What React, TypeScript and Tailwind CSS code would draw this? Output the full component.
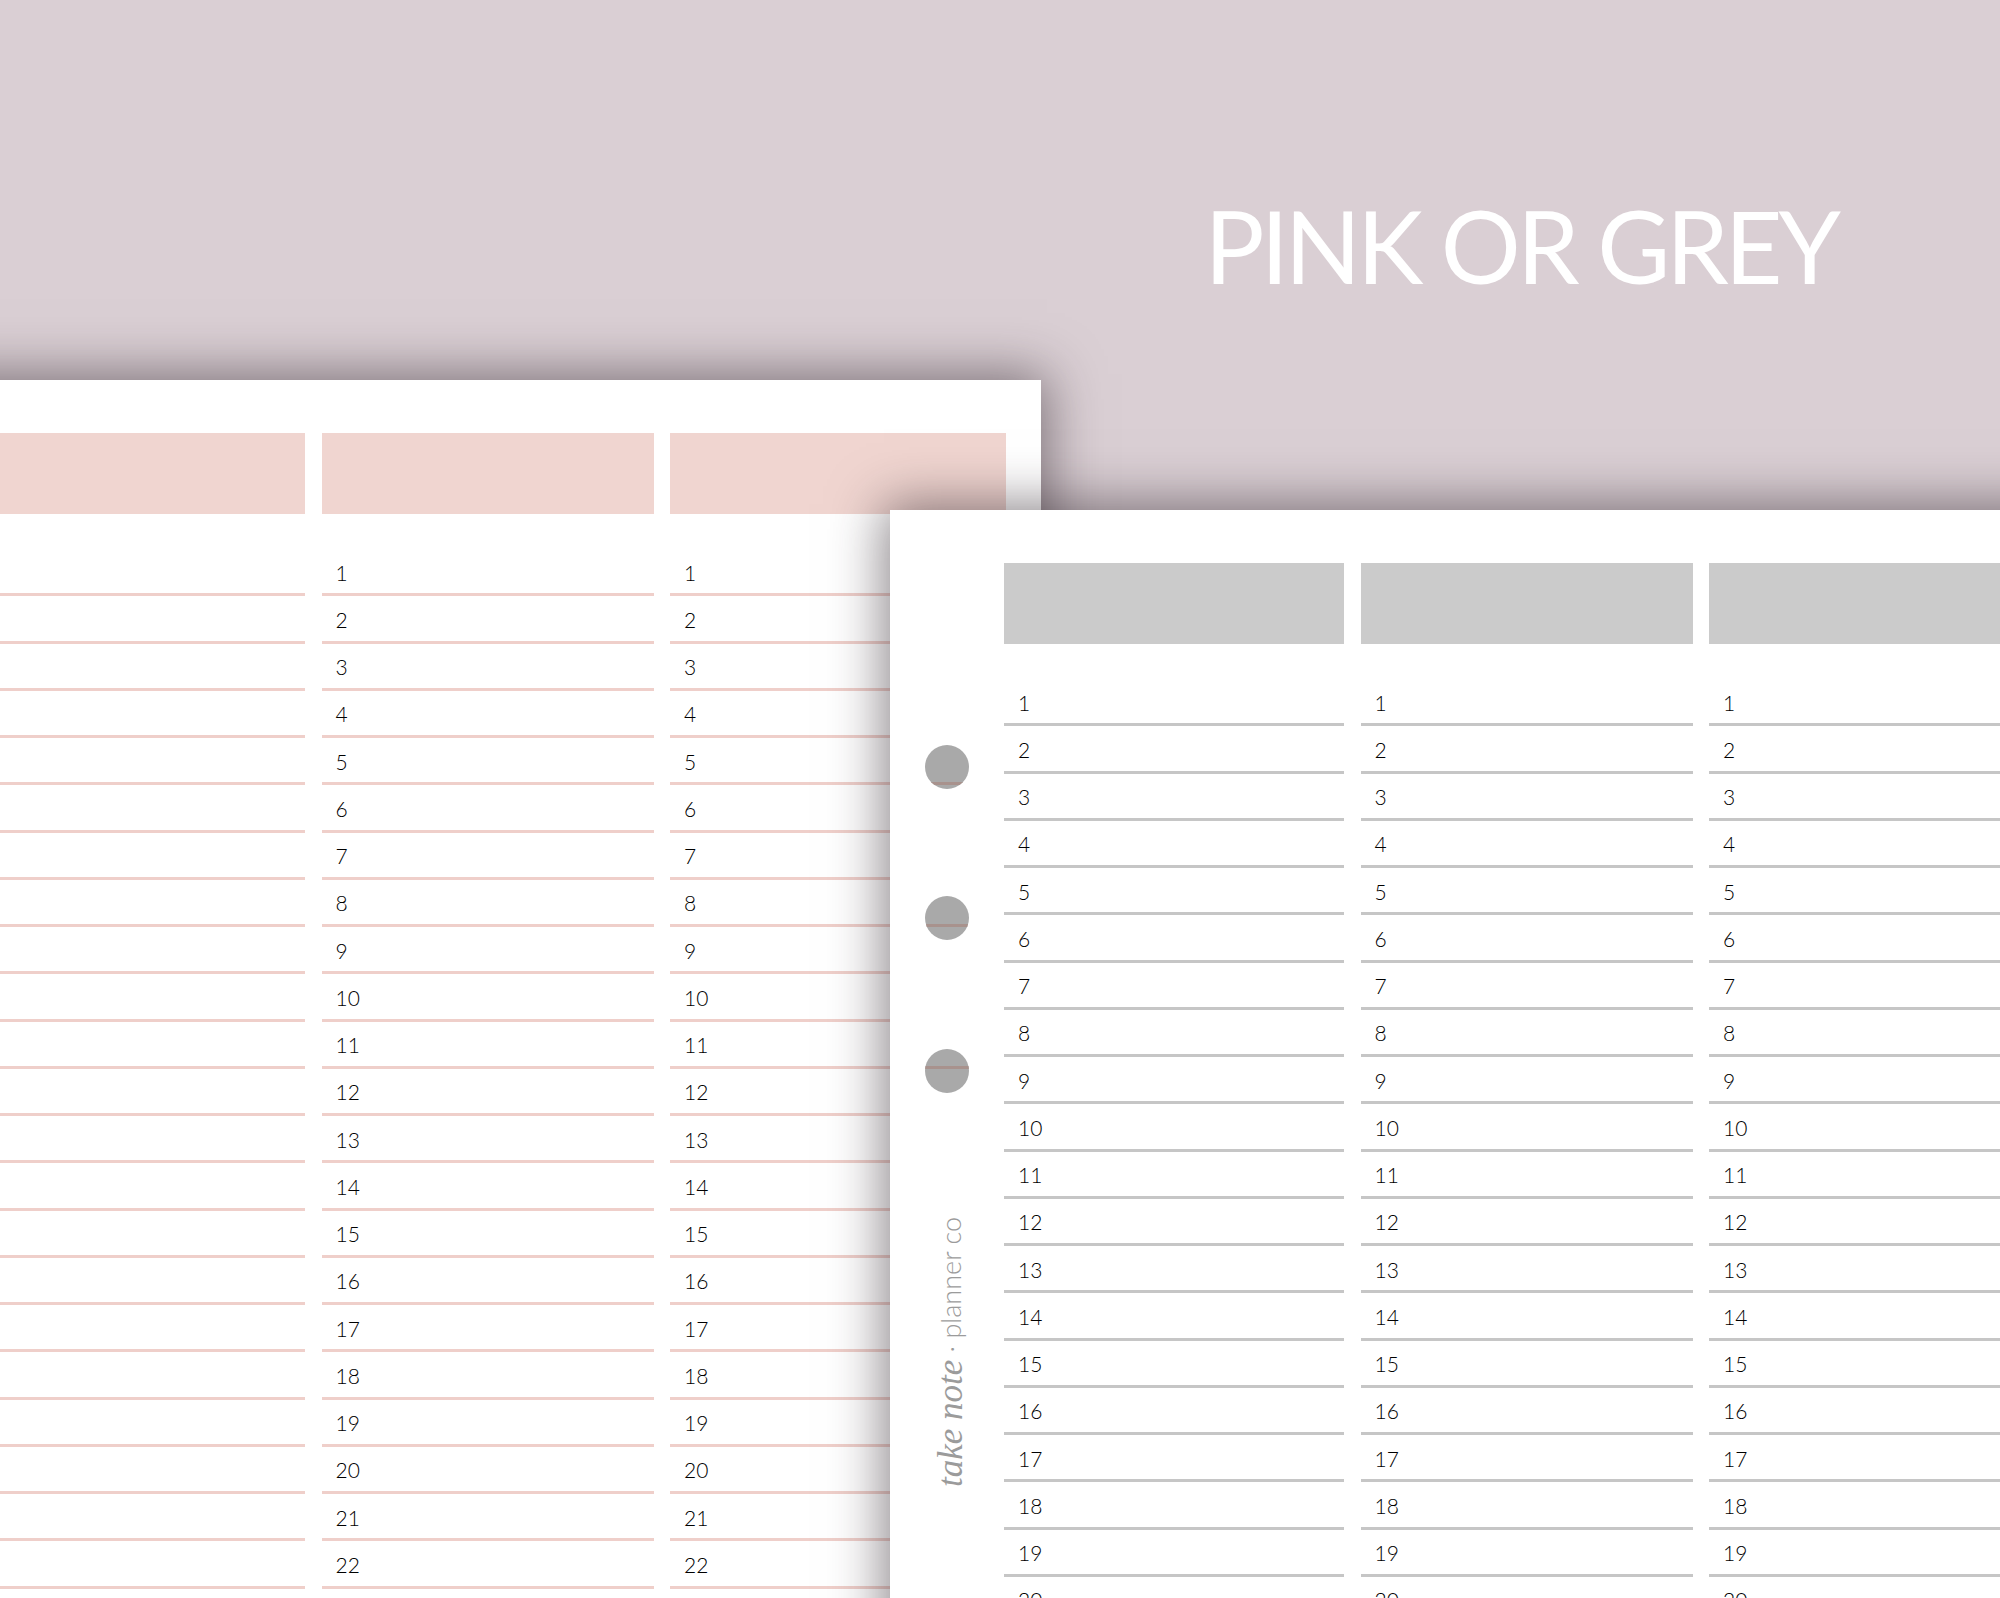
import React from 'react';

const colWidths = ['w-[340px]', 'w-[332px]', 'w-[336px]'];

type Theme = 'pink' | 'grey';

function Column({ width, theme, numbered, count }: { width: string; theme: Theme; numbered: boolean; count: number }) {
  const head = theme === 'pink' ? 'bg-[#f0d5d0]' : 'bg-[#cbcbcb]';
  const line = theme === 'pink' ? 'border-[#efcfca]' : 'border-[#c6c6c6]';
  const rows = Array.from({ length: count }, (_, i) => i + 1);
  return (
    <div className={`${width} shrink-0 flex flex-col`}>
      <div className={`h-[81px] ${head}`} />
      <div className="h-[35px]" />
      {rows.map((n) => (
        <div
          key={n}
          className={`h-[47.25px] shrink-0 flex items-center pt-[2px] pl-[14px] border-b-[3px] ${line} text-[21px] font-light leading-none text-black`}
        >
          {numbered ? n : null}
        </div>
      ))}
    </div>
  );
}

// hole shows the line of the pink page beneath it
function Hole({ lineTop }: { lineTop: string }) {
  return (
    <div className="relative w-[44px] h-[44px] rounded-full bg-[#a9a9a9] overflow-hidden">
      <div className={`absolute left-0 right-0 h-[3px] bg-[#a8928d] ${lineTop}`} />
    </div>
  );
}

function Page({ theme, count, className }: { theme: Theme; count: number; className: string }) {
  return (
    <div className={`absolute bg-white flex pt-[53px] pr-[36px] shadow-[0_0_50px_6px_rgba(45,35,42,0.55)] ${className}`}>
      <div className="w-[114px] shrink-0 flex flex-col items-center pt-[182px]">
        {theme === 'grey' && (
          <>
            <Hole lineTop="top-[37px]" />
            <div className="h-[107px]" />
            <Hole lineTop="top-[28px]" />
            <div className="h-[109px]" />
            <Hole lineTop="top-[17px]" />
            <div className="mt-[124px] ml-[6px] [writing-mode:vertical-rl] rotate-180 whitespace-nowrap text-[#9b9b9b] text-[27px] leading-none">
              <span className="font-['Liberation_Serif',serif] italic text-[35px]">take note</span>
              <span className="font-['Lato',sans-serif] font-light"> · planner co</span>
            </div>
          </>
        )}
      </div>
      <div className="flex gap-[16.5px]">
        {colWidths.map((w, i) => (
          <Column key={w} width={w} theme={theme} count={count} numbered={theme === 'grey' || i > 0} />
        ))}
      </div>
    </div>
  );
}

export default function App() {
  return (
    <div className="relative w-[2000px] h-[1598px] overflow-hidden bg-[#dacfd4] font-['Lato',sans-serif]">
      <div className="flex justify-end pt-[185px] pr-[163px]">
        <h1 className="text-white text-[100px] leading-[1.2] font-normal tracking-[-4px]">PINK OR GREY</h1>
      </div>
      <Page theme="pink" count={22} className="left-[-149px] top-[380px] w-[1190px] h-[1400px]" />
      <Page theme="grey" count={20} className="left-[890px] top-[510px] w-[1190px] h-[1300px]" />
    </div>
  );
}
